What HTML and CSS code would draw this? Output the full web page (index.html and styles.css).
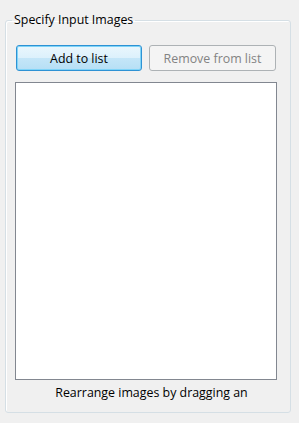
FILE: index.html
```html
<!DOCTYPE html>
<html lang="en">
<head>
  <meta charset="UTF-8" />
  <meta name="viewport" content="width=device-width, initial-scale=1.0" />
  <title>Specify Input Images</title>
  <link rel="stylesheet" href="styles.css">
</head>
<body>
  <!-- Group box with the image list -->
  <fieldset class="group">
    <legend>Specify Input Images</legend>

    <div class="button-row">
      <button class="btn btn-active">Add to list</button>
      <button class="btn" disabled>Remove from list</button>
    </div>

    <div class="image-list"></div>

    <p class="hint">Rearrange images by dragging an</p>
  </fieldset>
</body>
</html>
```

FILE: styles.css
```css
body {
  margin: 0;
  background: #f0f0f0;
  font-family: "Open Sans", "DejaVu Sans", sans-serif;
  font-size: 12.4px;
  color: #000;
}
.group {
  margin: 12px 0 0 5px;
  width: 286px;
  height: 401px;
  box-sizing: border-box;
  border: 1px solid #d5dfe5;
  border-radius: 3px;
  box-shadow: inset 1px 1px 0 #fff;
  padding: 0 13px 0 9px;
  min-width: 0;
}
legend {
  margin-left: -3px;
  padding: 0 2px;
  line-height: 16px;
}
.button-row {
  display: flex;
  gap: 7px;
  margin-top: 17px;
  padding-left: 1px;
}
.btn {
  height: 26px;
  width: 127px;
  margin: 0;
  padding: 0;
  font: inherit;
  color: #000;
  border: 1px solid #adb2b5;
  border-radius: 3px;
  background: #f4f4f4;
}
.btn:disabled { color: #838383; }
.btn-active {
  width: 126px;
  border-color: #2e92d4;
  box-shadow: inset 0 0 0 1px #7fd4f8;
  background: linear-gradient(#eaf7fd 0%, #dcf1fc 50%, #c4e6f8 51%, #b6dff5 100%);
}
.image-list {
  margin-top: 11px;
  width: 262px;
  height: 298px;
  box-sizing: border-box;
  border: 1px solid #828790;
  background: #fff;
}
.hint {
  margin: 5px 0 0;
  width: 262px;
  padding-left: 11px;
  box-sizing: border-box;
  text-align: center;
  line-height: 16px;
}
```
